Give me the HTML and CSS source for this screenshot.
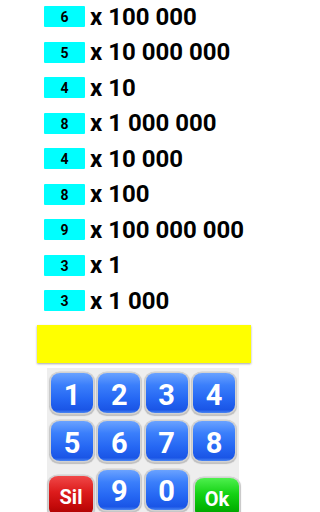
FILE: index.html
```html
<!DOCTYPE html>
<html>
<head>
<meta charset="utf-8">
<link rel="stylesheet" href="styles.css">
</head>
<body>
<div class="list">
  <div class="row"><span class="box">6</span><span class="mult">x 100 000</span></div>
  <div class="row"><span class="box">5</span><span class="mult">x 10 000 000</span></div>
  <div class="row"><span class="box">4</span><span class="mult">x 10</span></div>
  <div class="row"><span class="box">8</span><span class="mult">x 1 000 000</span></div>
  <div class="row"><span class="box">4</span><span class="mult">x 10 000</span></div>
  <div class="row"><span class="box">8</span><span class="mult">x 100</span></div>
  <div class="row"><span class="box">9</span><span class="mult">x 100 000 000</span></div>
  <div class="row"><span class="box">3</span><span class="mult">x 1</span></div>
  <div class="row"><span class="box">3</span><span class="mult">x 1 000</span></div>
</div>
<div class="answer"></div>
<div class="pad">
  <div class="key">1</div>
  <div class="key">2</div>
  <div class="key">3</div>
  <div class="key">4</div>
  <div class="key">5</div>
  <div class="key">6</div>
  <div class="key">7</div>
  <div class="key">8</div>
  <div class="key red">Sil</div>
  <div class="key">9</div>
  <div class="key">0</div>
  <div class="key green">Ok</div>
</div>
</body>
</html>
```
FILE: styles.css
```css
html, body {
  margin: 0;
  padding: 0;
  background: #ffffff;
  width: 288px;
  height: 512px;
  overflow: hidden;
  font-family: Roboto, "Liberation Sans", sans-serif;
}
.list {
  padding: 6px 0 0 44px;
}
.row {
  display: flex;
  align-items: center;
  height: 21px;
  margin-bottom: 14.5px;
}
.row:last-child {
  margin-bottom: 0;
}
.box {
  width: 41px;
  height: 21px;
  background: #00ffff;
  border-radius: 1px;
  display: flex;
  align-items: center;
  justify-content: center;
  font-weight: bold;
  font-size: 14px;
  color: #000;
  padding-top: 1px;
  box-sizing: border-box;
}
.mult {
  margin-left: 5px;
  font-weight: bold;
  font-size: 24px;
  line-height: 21px;
  color: #000;
  padding-top: 1px;
}
.answer {
  margin: 14px 0 0 37px;
  width: 214px;
  height: 38px;
  background: #ffff00;
  box-shadow: 0 1px 2px rgba(0,0,0,0.35);
}
.pad {
  margin: 5px 0 0 47px;
  width: 192px;
  box-sizing: border-box;
  padding: 5px 4px 0 4px;
  background: #eeeeee;
  display: grid;
  grid-template-columns: repeat(4, 42px);
  column-gap: 5.33px;
  row-gap: 8px;
  height: 150px;
}
.key {
  height: 40px;
  border-radius: 9px / 8px;
  background: linear-gradient(#6aa2ff 0%, #3b7ffb 30%, #2567f3 65%, #1a55e6 92%, #4a86f2 100%);
  box-shadow: 0 0 0 1.5px #d2d2d2, 0 1px 1px 1.5px #bdbdbd;
  color: #ffffff;
  font-weight: bold;
  font-size: 29px;
  display: flex;
  align-items: center;
  justify-content: center;
  padding-top: 3px;
  box-sizing: border-box;
}
.red {
  margin: 6px 0 0 -2px;
  width: 44px;
  font-size: 20px;
  background: linear-gradient(#f04848 0%, #dd1c1c 40%, #c40a0a 75%, #a80000 100%);
}
.green {
  margin: 8px 0 0 2px;
  width: 44px;
  font-size: 20px;
  background: linear-gradient(#4ef04e 0%, #14d214 40%, #02b402 75%, #009600 100%);
}
```
